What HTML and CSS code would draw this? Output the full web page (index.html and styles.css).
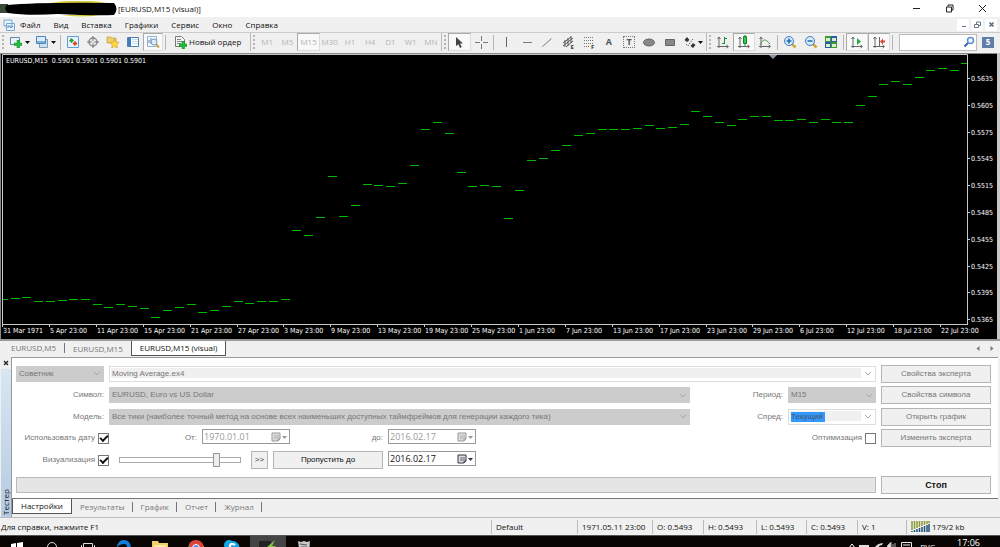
FILE: index.html
```html
<!DOCTYPE html>
<html lang="ru">
<head>
<meta charset="utf-8">
<title>EURUSD,M15 (visual)</title>
<link rel="stylesheet" href="styles.css">
</head>
<body>
<svg class="defs" width="0" height="0" aria-hidden="true">
  <symbol id="chev" viewBox="0 0 8 5"><path d="M1 .8 4 4 7 .8" fill="none" stroke="#a8a8a8"/></symbol>
  <symbol id="down" viewBox="0 0 5 3"><path d="M0 0h5L2.500 3z" fill="currentColor"/></symbol>
  <symbol id="cal" viewBox="0 0 18 10"><path d="M1 1h8v6L7 9H1z" fill="#ddd" stroke="currentColor"/><path d="M3 4h5M3 6h5M7 9V7h2" stroke="currentColor" stroke-width=".7" fill="none"/><path d="M11 4h5l-2.500 3z" fill="currentColor"/></symbol>
  <symbol id="axes" viewBox="0 0 14 14"><path d="M3 2v11M1 11.500h11M1.500 4 3 2l1.500 2M10.500 10l2 1.500-2 1.500" fill="none" stroke="#666"/></symbol>
  <symbol id="plus" viewBox="0 0 8 8"><path d="M3 0h2.500v3H8v2.500H5.500V8H3V5.500H0V3h3z" fill="#1fbf35" stroke="#13892a" stroke-width=".5"/></symbol>
</svg>

<header class="titlebar">
  <svg class="redact" viewBox="0 0 118 16" aria-hidden="true"><path d="M0 3h8v9H0z" fill="#3b4a35"/><path d="M50 2Q80-3 106 2zM62 14q20 3 38 0z" fill="#d9cf3c"/><path d="M7 4Q40 1 114 2q5 6 0 12-20 1-56-1-30 2-50-1Q3 8 7 4z" fill="#000"/></svg>
  <h1>[EURUSD,M15 (visual)]</h1>
  <div class="window-buttons">
    <button aria-label="Свернуть"><svg width="9" height="9"><path d="M1 4.500h7" stroke="#222"/></svg></button>
    <button aria-label="Восстановить"><svg width="9" height="9"><path d="M1.500 3h5v5h-5zM3 2.500V1h5v5H7" fill="none" stroke="#222"/></svg></button>
    <button aria-label="Закрыть"><svg width="9" height="9"><path d="m1 1 7 7M8 1 1 8" stroke="#222"/></svg></button>
  </div>
</header>

<nav class="menubar">
  <svg width="12" height="12" viewBox="0 0 12 12" aria-hidden="true"><path d="M1 1h8v6H1zM3.500 4.500h8v7h-8z" fill="#e8f3fc" stroke="#7aa7d0"/><path d="m4.500 9 2-2 1.500 2 2-2" fill="none" stroke="#4d88c4"/></svg>
  <button>Файл</button><button>Вид</button><button>Вставка</button><button>Графики</button><button>Сервис</button><button>Окно</button><button>Справка</button>
  <div class="child-buttons">
    <button aria-label="Свернуть окно"><svg width="7" height="7"><path d="M2 5.500h4" stroke="#678"/></svg></button>
    <button aria-label="Восстановить окно"><svg width="7" height="7"><path d="M.5 3.500h4v3h-4zM2.500 3V1h4v3.500H5" fill="none" stroke="#678"/></svg></button>
    <button aria-label="Закрыть окно"><svg width="7" height="7"><path d="m1.500 1.500 4 4m0-4-4 4" stroke="#567" stroke-width="1.500"/></svg></button>
  </div>
</nav>

<div class="toolbar">
  <div class="group">
    <i class="grip"></i>
    <button class="wide" aria-label="Новый график"><svg width="14" height="14"><path d="M1.500 2.500h9v7h-9z" fill="#eaf3fa" stroke="#5d88ad"/><use href="#plus" x="5" y="5" width="8" height="8"/></svg><svg width="5" height="3"><use href="#down"/></svg></button>
    <button class="wide" aria-label="Профили"><svg width="14" height="14"><path d="M4.500 4.500h8v8h-8z" fill="#cfe0ee" stroke="#7a9cba"/><path d="M1.500 1.500h9v7h-9z" fill="#dcecfa" stroke="#4a86bd"/><path d="M2 7h8" stroke="#79aedb" stroke-width="2"/></svg><svg width="5" height="3"><use href="#down"/></svg></button>
    <i class="sep"></i>
    <button aria-label="Обзор рынка"><svg width="14" height="14"><path d="M1.500 1.500h11v11h-11z" fill="#e6f2fc" stroke="#5f9fd4"/><path d="m5.500 3 2.500 2.500L5.500 8 3 5.500z" fill="#2aa63a"/><path d="m9 6 2.500 2.500L9 11 6.500 8.500z" fill="#e0472d"/></svg></button>
    <button aria-label="Окно данных"><svg width="14" height="14"><circle cx="7" cy="7" r="4" fill="none" stroke="#888" stroke-width="1.500"/><path d="M7 1v5M7 8v5M1 7h5M8 7h5" stroke="#777"/></svg></button>
    <button aria-label="Навигатор"><svg width="14" height="14"><path d="M1 2h4l1 1h4v5H1z" fill="#f0cf6d" stroke="#c19a3a" stroke-width=".7"/><path d="m8.500 4 1.400 3 3.300.400-2.400 2.300.6 3.300-2.900-1.600L5.600 13l.6-3.300-2.400-2.300L7.100 7z" fill="#ffd83d" stroke="#c99a1c" stroke-width=".6"/></svg></button>
    <button aria-label="Терминал"><svg width="14" height="14"><path d="M1.500 2.500h11v9h-11z" fill="#fff" stroke="#4b7fb5"/><path d="M2 3h3v8H2z" fill="#3f7fbd"/><path d="M6 4.500h6M6 6.500h6M6 8.500h6" stroke="#c9dcef"/></svg></button>
    <button class="pressed" aria-label="Тестер"><svg width="14" height="14"><path d="M1.500 1.500h9v10h-9z" fill="#f5faff" stroke="#8fb2d3"/><path d="M3 8V5m2 4V3m2 4V4" stroke="#77a"/><circle cx="8" cy="7" r="3" fill="#dcebf8" stroke="#6c9cc8"/><path d="m10 9 3 3.500" stroke="#cba64d" stroke-width="2"/></svg></button>
    <i class="sep"></i>
    <button class="order"><svg width="14" height="14"><path d="M1.500 1.500h6l3 3v7h-9z" fill="#f4f4f4" stroke="#777"/><path d="M3 4.500h4M3 6.500h5M3 8.500h4" stroke="#888"/><use href="#plus" x="5" y="6" width="8" height="8"/></svg>Новый ордер</button>
  </div>
  <div class="group frames">
    <i class="grip"></i>
    <button disabled>M1</button><button disabled>M5</button><button disabled class="pressed">M15</button><button disabled>M30</button><button disabled>H1</button><button disabled>H4</button><button disabled>D1</button><button disabled>W1</button><button disabled>MN</button>
  </div>
  <div class="group draw">
    <i class="grip"></i>
    <button class="pressed" aria-label="Курсор"><svg width="14" height="14"><path d="m4 2 7 6.500H8l1.800 3.600-1.800.8-1.600-3.600L4 11z" fill="#444"/></svg></button>
    <button aria-label="Перекрестие"><svg width="14" height="14"><path d="M7.500 1v5M7.500 9v5M1 7.500h5M9 7.500h5" stroke="#777"/></svg></button>
    <i class="sep"></i>
    <button aria-label="Вертикальная линия"><svg width="14" height="14"><path d="M7.500 2v10" stroke="#666"/></svg></button>
    <button aria-label="Горизонтальная линия"><svg width="14" height="14"><path d="M3 7.500h9" stroke="#777"/></svg></button>
    <button aria-label="Трендовая линия"><svg width="14" height="14"><path d="m2.500 11.500 9-8" stroke="#777"/></svg></button>
    <button aria-label="Канал"><svg width="14" height="14"><path d="m1 8 8-6M1 11l10-8M4 12l7-6M3 5v7M6 3v8M9 1v7" stroke="#555"/></svg><small>E</small></button>
    <button aria-label="Фибоначчи"><svg width="14" height="14"><path d="M2 2.500h10M2 5.500h10M2 8.500h10M2 11.500h6" stroke="#777" stroke-dasharray="1 1"/></svg><small>F</small></button>
    <button class="letter">A</button>
    <button class="letter boxed" aria-label="Текстовая метка">T</button>
    <button aria-label="Эллипс"><svg width="14" height="14"><ellipse cx="7" cy="7.500" rx="5.500" ry="3.500" fill="#888" stroke="#666"/></svg></button>
    <button aria-label="Прямоугольник"><svg width="14" height="14"><path d="M2.500 4.500h9v6h-9z" fill="#888" stroke="#666"/></svg></button>
    <button class="arrows" aria-label="Стрелки"><svg width="12" height="14"><path d="m3 2 2.500 3L3 7 .5 5zM9 8l2.500 2L9 13l-2.500-2z" fill="#333"/><path d="m2 9 2 2 2-3 3-4" fill="none" stroke="#666" stroke-dasharray="1.500 1"/></svg><svg width="5" height="3"><use href="#down"/></svg></button>
  </div>
  <div class="group charts">
    <i class="grip"></i>
    <button aria-label="Бары"><svg width="14" height="14"><use href="#axes"/><path d="M8.500 2v7M6 8.500h2M9 3.500h2" stroke="#198a35"/></svg></button>
    <button class="pressed" aria-label="Свечи"><svg width="14" height="14"><use href="#axes"/><path d="M8 0v11" stroke="#198a35"/><path d="M6.500 1.500h3v7h-3z" fill="#25d04a" stroke="#14842b"/></svg></button>
    <button aria-label="Линия"><svg width="14" height="14"><use href="#axes"/><path d="M2 10c3-6 5-7 10-1" fill="none" stroke="#4a9a55"/></svg></button>
    <i class="sep"></i>
    <button aria-label="Увеличить"><svg width="14" height="14"><path d="m8.500 8.500 4 4" stroke="#d4a73c" stroke-width="2.500"/><circle cx="6" cy="6" r="4.500" fill="#d5ebfb" stroke="#3b7fc0"/><path d="M3.500 6h5M6 3.500v5" stroke="#2268ad" stroke-width="1.500"/></svg></button>
    <button aria-label="Уменьшить"><svg width="14" height="14"><path d="m8.500 8.500 4 4" stroke="#d4a73c" stroke-width="2.500"/><circle cx="6" cy="6" r="4.500" fill="#d5ebfb" stroke="#3b7fc0"/><path d="M3.500 6h5" stroke="#2268ad" stroke-width="1.500"/></svg></button>
    <button aria-label="Мозаика"><svg width="14" height="14"><path d="M1 1h6v6H1zM7 7h6v6H7z" fill="#3f9a2f"/><path d="M7 1h6v6H7zM1 7h6v6H1z" fill="#2b5cab"/><path d="M2 3h4v3H2zM8 3h4v3H8zM2 9h4v3H2zM8 9h4v3H8z" fill="#d9eec9"/></svg></button>
    <i class="sep"></i>
    <button class="pressed" aria-label="Автопрокрутка"><svg width="14" height="14"><use href="#axes"/><path d="m7 3 4 3.500L7 10z" fill="#25ad45"/></svg></button>
    <button class="pressed" aria-label="Сдвиг графика"><svg width="14" height="14"><use href="#axes"/><path d="M7.500 2v9" stroke="#666"/><path d="m8 6.500 3-3v2h2v2h-2v2z" fill="#d6492c"/></svg></button>
    <i class="sep"></i>
  </div>
  <div class="search">
    <input type="text" aria-label="Поиск">
    <svg width="12" height="12"><circle cx="7.500" cy="4.500" r="3" fill="#eef6ff" stroke="#5b8fd6" stroke-width="1.500"/><path d="m5 7-3.500 3.500" stroke="#3c62b0" stroke-width="2"/></svg>
    <button class="badge">5</button>
  </div>
</div>

<main class="chart">
  <svg id="chart" viewBox="0 0 1000 286" role="img" aria-label="График EURUSD,M15">
    <path d="M0 .5h1000" stroke="#888"/><path d="M.5 0v286" stroke="#888"/><path d="M997 0h3v286h-3z" fill="#c8c8c8"/>
    <path class="axis" d="M2.500 272V1.500H967.500V272M2 271.500h966"/>
    <path d="M769 2h8l-4 4z" fill="#8a9aaa"/>
    <text x="6" y="10" xml:space="preserve">EURUSD,M15  0.5901 0.5901 0.5901 0.5901</text>
  </svg>
</main>

<nav class="tabs chart-tabs">
  <button>EURUSD,M5</button><button>EURUSD,M15</button><button class="active">EURUSD,M15 (visual)</button>
  <span class="scroll"><svg width="4" height="6"><path d="M3.500 0v5L.5 2.500z" fill="#777"/></svg><svg width="4" height="6"><path d="M.5 0v5l3-2.500z" fill="#777"/></svg></span>
</nav>

<section class="tester">
  <aside><button aria-label="Закрыть тестер"><svg width="6" height="6"><path d="m1 1 4 4m0-4L1 5" stroke="#222" stroke-width="1.300"/></svg></button><span>Тестер</span></aside>
  <div class="panel">
    <form>
      <div class="row type">
        <div class="select"><select aria-label="Тип" disabled><option>Советник</option></select><svg width="8" height="5"><use href="#chev"/></svg></div>
        <div class="select light"><select aria-label="Эксперт" disabled><option>Moving Average.ex4</option></select><svg width="8" height="5"><use href="#chev"/></svg></div>
      </div>
      <button type="button" disabled>Свойства эксперта</button>

      <div class="row quad">
        <label for="symbol">Символ:</label>
        <div class="select"><select id="symbol" disabled><option>EURUSD, Euro vs US Dollar</option></select><svg width="8" height="5"><use href="#chev"/></svg></div>
        <label for="period">Период:</label>
        <div class="select"><select id="period" disabled><option>M15</option></select><svg width="8" height="5"><use href="#chev"/></svg></div>
      </div>
      <button type="button" disabled>Свойства символа</button>

      <div class="row quad">
        <label for="model">Модель:</label>
        <div class="select"><select id="model" disabled><option>Все тики (наиболее точный метод на основе всех наименьших доступных таймфреймов для генерации каждого тика)</option></select><svg width="8" height="5"><use href="#chev"/></svg></div>
        <label for="spread">Спред:</label>
        <div class="select light marked"><input id="spread" type="text" value="Текущий" disabled><svg width="8" height="5"><use href="#chev"/></svg></div>
      </div>
      <button type="button" disabled>Открыть график</button>

      <div class="row dates">
        <label class="check">Использовать дату<input type="checkbox" checked disabled></label>
        <label class="from" for="from">От:</label>
        <div class="date off"><input id="from" type="text" value="1970.01.01" disabled><svg width="18" height="10"><use href="#cal"/></svg></div>
        <label class="to" for="to">до:</label>
        <div class="date off"><input id="to" type="text" value="2016.02.17" disabled><svg width="18" height="10"><use href="#cal"/></svg></div>
        <label class="check last">Оптимизация<input type="checkbox" disabled></label>
      </div>
      <button type="button" disabled>Изменить эксперта</button>

      <div class="row visual">
        <label class="check">Визуализация<input type="checkbox" checked></label>
        <input class="slider" type="range" min="0" max="100" value="82" aria-label="Скорость">
        <button type="button" class="fast">&gt;&gt;</button>
        <button type="button" class="skip">Пропустить до</button>
        <div class="date"><input type="text" value="2016.02.17" aria-label="Пропустить до даты"><svg width="18" height="10"><use href="#cal"/></svg></div>
      </div>

      <div class="progress" role="progressbar" aria-label="Ход теста"></div>
      <button type="button" class="stop">Стоп</button>
    </form>
    <nav class="tabs tester-tabs">
      <button class="active">Настройки</button><button>Результаты</button><button>График</button><button>Отчет</button><button>Журнал</button>
    </nav>
  </div>
</section>

<footer class="status">
  <span>Для справки, нажмите F1</span><span>Default</span><span>1971.05.11 23:00</span><span>O: 0.5493</span><span>H: 0.5493</span><span>L: 0.5493</span><span>C: 0.5493</span><span>V: 1</span>
  <span><svg width="19" height="11"><path d="M1 0v9M3.500 0v8M6 0v7M8.500 0v6M11 0v5M13.500 0v4M16 0v3M18 0v2" stroke="#8a9a35" stroke-width="1.500"/><path d="M1 10v1M3.500 9v2M6 8v3M8.500 7v4M11 6v5M13.500 5v6M16 4v7M18 3v8" stroke="#1f4e79" stroke-width="1.500"/></svg>179/2 kb</span>
</footer>

<footer class="taskbar">
  <button class="start" aria-label="Пуск"><svg width="16" height="16"><path d="m2 4 5-1v5H2zM8 3l6-1v6H8zM2 9h5v5l-5-1zM8 9h6v6l-6-1z" fill="#fff"/></svg></button>
  <button aria-label="Поиск"><svg width="16" height="16"><circle cx="8" cy="7" r="4.500" fill="none" stroke="#ddd"/></svg></button>
  <button aria-label="Представление задач"><svg width="16" height="16"><path d="M3.500 3.500h9v8h-9zM1.500 5v6M14.500 5v6" fill="none" stroke="#ddd"/></svg></button>
  <button aria-label="Edge"><svg width="16" height="16"><path d="M1 8C1 2 5 0 8 0c5 0 7 4 7 9H6c0 4 5 5 8 3v3C7 18 2 14 4 8l7-1c0-2-1-3-3-3C5 4 3 5 1 8z" fill="#0f7bd7"/></svg></button>
  <button aria-label="Проводник"><svg width="16" height="16"><path d="M0 1h6l1 2h9v12H0z" fill="#f1cf67"/><path d="M2 5h12v8H2z" fill="#fbe7a3"/></svg></button>
  <button aria-label="Chrome"><svg width="16" height="16"><circle cx="8" cy="8" r="8" fill="#dc4437"/><path d="M1 5 5 11l3 5Q-1 15 1 5z" fill="#2f9e4f"/><path d="M16 6q1 10-8 10l4-7z" fill="#fdd037"/><circle cx="8" cy="8" r="3.500" fill="#4285f4" stroke="#fff"/></svg></button>
  <button aria-label="Skype"><svg width="16" height="16"><circle cx="5" cy="5" r="5" fill="#12a8e8"/><circle cx="8.500" cy="8" r="7" fill="#12a8e8"/><path d="M11 5C9 3 5 4 6 6.500s5 1 5 3.500-4 2-6 0" fill="none" stroke="#fff" stroke-width="2"/></svg></button>
  <button class="running" aria-label="MetaTrader"><svg width="20" height="16"><path d="M1 1h12v14H1z" fill="#222"/><path d="m17 0-8 7h4l-4 8 9-9h-4z" fill="#83c341"/></svg></button>
  <button aria-label="Корзина"><svg width="16" height="16"><path d="m2 1 3 1 3-1 3 1 3-1-1 14H4z" fill="#c8c8c8"/><path d="m4 4 7 1M5 7h6" stroke="#555"/></svg></button>
  <div class="tray">
    <svg width="8" height="12"><path d="m1 10 3-4 3 4" fill="none" stroke="#fff"/></svg>
    <svg width="12" height="12"><path d="M1 7h10v5H1z" fill="#ddd"/></svg>
    <svg width="12" height="12"><path d="M2 12q1-6 9-7l-1 2q-4 0-4 5z" fill="#ddd"/></svg>
    <svg width="12" height="12"><path d="m1 8 4-4v8zM7 6v5M9 5v7" fill="#ddd" stroke="#aaa"/></svg>
    <svg width="13" height="12"><path d="M1.500 4.500h10v8h-10zM3 7h7M3 10h7" fill="none" stroke="#eee"/></svg>
    <span>РУС</span><time>17:06</time>
  </div>
</footer>
<script src="chart.js"></script>
</body>
</html>
```

FILE: styles.css
```css
* { box-sizing: border-box; }
body { margin: 0; height: 100vh; overflow: hidden; display: flex; flex-direction: column; background: #f0f0f0; font: 8px/12px "Open Sans", sans-serif; color: #111; }
button, input, select { font: inherit; color: inherit; margin: 0; padding: 0; border: 0; background: none; border-radius: 0; }
button { display: flex; align-items: center; justify-content: center; white-space: nowrap; }
svg { display: block; flex: none; }
.defs { position: absolute; }

.titlebar { flex: none; height: 17px; display: flex; align-items: center; background: #fff; }
.redact { width: 118px; height: 16px; }
.titlebar h1 { margin: 0; font-size: 8px; font-weight: 400; flex: 1; }
.window-buttons { display: flex; align-items: center; gap: 24px; padding-right: 13px; }

.menubar { flex: none; height: 15px; display: flex; align-items: center; padding: 0 3px; }
.menubar > button { margin-left: 13px; }
.menubar > svg + button { margin-left: 5px; }
.child-buttons { display: flex; gap: 2px; margin-left: auto; }
.child-buttons button { width: 12px; height: 12px; background: #fff; }

.toolbar { flex: none; height: 21px; display: grid; grid-template-columns: 250px 192px 265px 188px minmax(0, 1fr); border-top: 1px solid #ccc; padding-bottom: 2px; }
.group { display: flex; align-items: center; }
.group > button { height: 18px; width: 20px; flex: none; }
.group > .wide { width: 26px; gap: 2px; }
.group > .order { width: auto; padding: 0 6px; gap: 1px; }
.grip { width: 2px; height: 14px; margin: 0 2px; flex: none; border-left: 2px dotted #b5b5b5; }
.sep { width: 1px; height: 15px; margin: 0 2px; flex: none; background: #b5b5b5; }
.group > .pressed { background: #f9f9f9; border: 1px solid #ddd; border-top-color: #aaa; border-left-color: #aaa; }
.frames { border-right: 1px solid #bbb; border-left: 1px solid #bbb; color: #b5b5b5; }
.frames > button { flex: 1; }
.draw > button, .charts > button { flex: 1; }
.group > .arrows { flex: 0 0 26px; gap: 2px; }
.draw { border-right: 1px solid #bbb; }
.draw small { align-self: flex-end; font-size: 6px; line-height: 8px; font-weight: 700; margin-left: -5px; color: #333; }
.letter { font-weight: 700; font-size: 9px; color: #555; }
.group > .boxed { flex: 0 0 12px; height: 12px; margin: 0 4px; border: 1px dotted #777; }
.search { display: flex; align-items: center; padding-left: 4px; }
.search input { flex: 1; min-width: 0; height: 17px; padding: 0 16px 0 3px; background: #fff; border: 1px solid #bbb; }
.search svg { margin-left: -14px; margin-right: 7px; }
.badge { width: 12px; height: 11px; margin-right: 6px; background: #5f7da8; color: #fff; font-weight: 700; }

.chart { flex: none; background: #000; }
.chart > svg { width: 100%; height: auto; }
.chart text { font: 7px "DejaVu Sans Condensed", sans-serif; fill: #fff; }
.axis { fill: none; stroke: #c8c8c8; }
.bars { fill: none; stroke: #00b800; }

.tabs { flex: none; display: flex; color: #777; }
.tabs button { position: relative; height: 15px; padding: 0 8px; }
.tabs .active { background: #fff; color: #111; border: 1px solid #555; border-top: 0; }
.chart-tabs { height: 18px; border-top: 2px solid #999; }
.chart-tabs button:first-child { border-right: 1px solid #777; height: 10px; margin-top: 2px; padding-left: 11px; }
.chart-tabs .active { padding: 0 8px; }
.scroll { display: flex; gap: 10px; margin: 5px 6px 0 auto; }

.tester { flex: none; display: flex; height: 160px; font-family: "Liberation Sans", sans-serif; }
.tester aside { width: 11px; display: flex; flex-direction: column; align-items: center; background: #f0f0f0; }
.tester aside button { height: 12px; width: 9px; }
.tester aside span { flex: 1; width: 10px; background: linear-gradient(#b5cbe2, #d8e6f3); font-family: "Open Sans", sans-serif; writing-mode: vertical-rl; transform: rotate(180deg); padding-top: 2px; line-height: 10px; }
.panel { flex: 1; min-width: 0; border: 1px solid #999; border-width: 1px 0 0 1px; display: flex; flex-direction: column; background: #fff; margin-right: 2px; }
form { flex: 1; display: grid; grid-template-columns: 1fr 110px; grid-template-rows: 17px 18px 17px 18px 18px 22px; gap: 4px 5px; padding: 7px 7px 0 4px; color: #777; }
form button { background: #f0f0f0; border: 1px solid #b5b5b5; height: 18px; color: #777; }
.row { display: flex; align-items: center; gap: 5px; min-width: 0; }
.type, .quad { display: grid; grid-template-columns: 88px 1fr; }
.quad { grid-template-columns: 88px 1fr 88px 88px; }
.quad label { text-align: right; }
.select { display: grid; align-items: center; min-width: 0; height: 16px; background: #ccc; }
.select > * { grid-area: 1 / 1; }
.select select, .select input { appearance: none; width: 100%; min-width: 0; padding: 0 14px 0 3px; color: #777; opacity: 1; }
.select svg { justify-self: end; margin-right: 3px; }
.light { background: linear-gradient(#f0f0f0, #f0f0f0) 1px 1px / calc(100% - 15px) calc(100% - 4px) no-repeat #fff; border: 1px solid #ddd; }
.light select { padding-left: 2px; }
.marked input { width: 34px; height: 10px; margin-left: 2px; padding: 0; background: #3399ff; color: #456; }
.dates, .visual { align-items: flex-start; }
.visual { grid-column: 1 / -1; }
.check { width: 93px; height: 18px; flex: none; display: flex; align-items: center; justify-content: flex-end; gap: 3px; white-space: nowrap; margin-right: -5px; }
.check input { appearance: none; width: 11px; height: 11px; border: 1px solid #777; background: #fff; display: grid; place-items: center; }
.check input:checked::after { content: ""; width: 6px; height: 3px; border: solid #111; border-width: 0 0 2px 2px; transform: rotate(-45deg); margin-bottom: 2px; }
.from, .to { width: 88px; text-align: right; line-height: 17px; }
.last { margin: 0 0 0 auto; }
.date { display: flex; align-items: center; flex: none; width: 88px; height: 15px; border: 1px solid #999; background: #fff; color: #334; }
.date input { flex: 1; min-width: 0; padding-left: 1px; color: #111; font: 9px/12px "Open Sans", sans-serif; }
.off, .off input { color: #999; }
.slider { appearance: none; width: 122px; height: 6px; margin: 6px 5px 0 10px; border: 1px solid #aaa; background: #fff; }
.slider::-webkit-slider-thumb { appearance: none; width: 7px; height: 14px; border: 1px solid #999; background: #eee; }
form .fast { width: 17px; color: #444; }
form .skip { width: 110px; color: #111; }
.progress { height: 16px; margin-top: 4px; border: 1px solid #bbb; background: #e5e5e5; }
form .stop { margin-top: 3px; color: #111; font-weight: 700; font-size: 9px; }
.tester-tabs { height: 19px; background: #f0f0f0; border-top: 1px solid #777; font-family: "Open Sans", sans-serif; }
.tester-tabs button:not(.active)::after { content: ""; position: absolute; right: 0; top: 3px; height: 10px; border-right: 1px solid #777; }

.status { flex: none; height: 18px; display: grid; grid-template-columns: 1fr 86px 75px 51px 53px 50px 51px 49px 94px; align-items: center; border-top: 1px solid #bbb; }
.status span { display: flex; align-items: center; gap: 2px; height: 14px; padding-left: 4px; border-left: 1px solid #bbb; white-space: nowrap; }
.status span:first-child { border: 0; padding-left: 1px; }
.taskbar { flex: none; height: 29px; display: flex; align-items: flex-start; background: #090503; color: #fff; border-top: 1px solid #555; }
.taskbar button { width: 36px; height: 28px; align-items: flex-start; padding-top: 4px; }
.taskbar .start { width: 34px; }
.taskbar .running { background: #444; }
.tray { display: flex; align-items: flex-start; gap: 2px; margin-left: auto; padding: 2px 20px 0 0; }
.tray span { padding: 3px 20px 0 5px; }
.tray time { font-size: 9px; line-height: 10px; }
```

FILE: chart.js
```js
const NS = "http://www.w3.org/2000/svg";
const svg = document.getElementById("chart");
const TOP = 53;

// Vertical position of each bar, left to right.
const bars = [
  299, 298, 297, 301, 301, 300, 299, 299, 304, 307, 304, 306, 308, 317, 310, 307, 304, 312, 310, 306, 301, 303, 301, 301, 299,
  230, 235, 217, 176, 216, 205, 184, 185, 186, 183, 165, 129, 122, 133, 172, 186, 185, 186, 218, 190, 160, 158,
  150, 145, 135, 133, 129, 129, 129, 128, 125, 128, 127, 124, 111, 116, 122, 125, 119, 116,
  116, 120, 120, 119, 122, 119, 122, 122, 105, 96, 84, 81, 84, 77, 70, 68, 70, 63
];
const dates = ["31 Mar 1971", "5 Apr 23:00", "11 Apr 23:00", "15 Apr 23:00", "21 Apr 23:00", "27 Apr 23:00", "3 May 23:00", "9 May 23:00", "13 May 23:00", "19 May 23:00", "25 May 23:00", "1 Jun 23:00", "7 Jun 23:00", "13 Jun 23:00", "17 Jun 23:00", "23 Jun 23:00", "29 Jun 23:00", "6 Jul 23:00", "12 Jul 23:00", "18 Jul 23:00", "22 Jul 23:00"];

function add(name, attrs, text) {
  const el = document.createElementNS(NS, name);
  for (const key in attrs) el.setAttribute(key, attrs[key]);
  if (text) el.textContent = text;
  svg.append(el);
}

const path = bars.map((y, i) => {
  const x = Math.round(2.8 + i * 11.74);
  const left = Math.max(3, x - 4);
  return `M${left} ${y - TOP + 0.5}H${Math.min(967, x + 5)}`;
}).join("");
add("path", { class: "bars", d: path });

dates.forEach((label, i) => {
  const x = Math.round(3 + i * 46.9);
  add("path", { class: "axis", d: `M${x - 0.5} 272v2` });
  add("text", { x: i ? x : 3, y: 280 }, label);
});

for (let i = 0; i < 10; i++) {
  const y = Math.round(25 + i * 26.8);
  add("path", { class: "axis", d: `M968 ${y + 0.5}h2` });
  add("text", { x: 971, y: y + 3 }, (0.5635 - i * 0.003).toFixed(4));
}
```
